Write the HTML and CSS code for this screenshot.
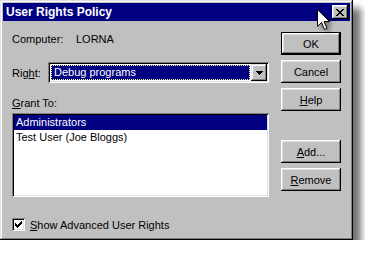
FILE: index.html
```html
<!DOCTYPE html>
<html>
<head>
    <title>User Rights Policy</title>
    <link rel="stylesheet" href="styles.css">
</head>
<body>
    <div class="window">
        <div class="titlebar">
            <span class="title">User Rights Policy</span>
            <button class="close-btn" type="button">
                <svg width="8" height="7" viewBox="0 0 8 7">
                    <path d="M0 0h2v1h1v1h2v-1h1v-1h2v1h-1v1h-1v1h-1v1h1v1h1v1h1v1h-2v-1h-1v-1h-2v1h-1v1h-2v-1h1v-1h1v-1h1v-1h-1v-1h-1v-1h-1z" fill="#000"/>
                </svg>
            </button>
        </div>

        <div class="content">
            <div class="main">
                <div class="info-row">
                    <span class="info-label">Computer:</span>
                    <span>LORNA</span>
                </div>

                <div class="right-row">
                    <label class="right-label">Rig<u>h</u>t:</label>
                    <div class="combo">
                        <div class="combo-field">
                            <span class="combo-value">Debug programs</span>
                        </div>
                        <div class="combo-arrow">
                            <svg width="7" height="4" viewBox="0 0 7 4">
                                <path d="M0 0h7v1h-1v1h-1v1h-1v1h-1v-1h-1v-1h-1v-1h-1z" fill="#000"/>
                            </svg>
                        </div>
                    </div>
                </div>

                <div class="grant-label"><u>G</u>rant To:</div>
                <div class="listbox">
                    <div class="list-item selected">Administrators</div>
                    <div class="list-item">Test User (Joe Bloggs)</div>
                </div>

                <div class="check-row">
                    <span class="checkbox">
                        <svg width="7" height="7" viewBox="0 0 7 7">
                            <path d="M6 0h1v3h-1v1h-1v1h-1v1h-1v1h-1v-1h-1v-1h-1v-3h1v1h1v1h1v-1h1v-1h1v-1h1z" fill="#000"/>
                        </svg>
                    </span>
                    <span><u>S</u>how Advanced User Rights</span>
                </div>
            </div>

            <div class="buttons">
                <button class="btn btn-default" type="button">OK</button>
                <button class="btn" type="button">Cancel</button>
                <button class="btn" type="button"><u>H</u>elp</button>
                <button class="btn btn-add" type="button"><u>A</u>dd...</button>
                <button class="btn" type="button"><u>R</u>emove</button>
            </div>
        </div>
    </div>

    <svg class="cursor" width="14" height="22" viewBox="0 0 14 22">
        <path d="M0.5 0.5v17l4-4 3 7 2.5-1-3-7h5.5z" fill="#fff" stroke="#000" stroke-width="1"/>
    </svg>
</body>
</html>
```

FILE: styles.css
```css
body {
    margin: 0;
    background: #fff;
    font-family: "Liberation Sans", Arial, sans-serif;
    font-size: 11px;
    color: #000;
}
u {
    text-decoration: underline;
    text-underline-offset: 1px;
}
.window {
    width: 353px;
    height: 240px;
    box-sizing: border-box;
    padding: 3px;
    background: #c0c0c0;
    box-shadow: inset -1px -1px #000, inset 1px 1px #dfdfdf,
                inset -2px -2px #808080, inset 2px 2px #fff,
                8px 8px 7px rgba(0,0,0,0.55);
}
.titlebar {
    height: 18px;
    background: #000080;
    display: flex;
    align-items: center;
    justify-content: space-between;
    padding: 0 2px 0 3px;
}
.title {
    color: #fff;
    font-weight: bold;
    font-size: 12px;
}
.close-btn {
    width: 16px;
    height: 14px;
    padding: 0;
    border: none;
    background: #c0c0c0;
    display: flex;
    align-items: center;
    justify-content: center;
    box-shadow: inset -1px -1px #000, inset 1px 1px #fff,
                inset -2px -2px #808080, inset 2px 2px #dfdfdf;
}
.content {
    display: flex;
    gap: 12px;
    padding: 0 9px 0 9px;
}
.main {
    width: 257px;
}
.info-row {
    margin-top: 12px;
    line-height: 13px;
    display: flex;
}
.info-label {
    width: 64px;
}
.right-row {
    margin-top: 16px;
    display: flex;
    align-items: center;
}
.right-label {
    width: 36px;
}
.combo {
    flex: 1;
    height: 21px;
    box-sizing: border-box;
    padding: 2px;
    display: flex;
    background: #fff;
    box-shadow: inset 1px 1px #808080, inset -1px -1px #fff,
                inset 2px 2px #000, inset -2px -2px #dfdfdf;
}
.combo-field {
    flex: 1;
    padding: 1px;
}
.combo-value {
    display: block;
    height: 15px;
    box-sizing: border-box;
    line-height: 13px;
    padding-left: 2px;
    background: #000080;
    color: #fff;
    border: 1px dotted #ffff99;
}
.combo-arrow {
    width: 16px;
    height: 17px;
    background: #c0c0c0;
    display: flex;
    align-items: center;
    justify-content: center;
    box-shadow: inset -1px -1px #000, inset 1px 1px #dfdfdf,
                inset -2px -2px #808080, inset 2px 2px #fff;
}
.grant-label {
    margin-top: 14px;
    line-height: 13px;
}
.listbox {
    margin-top: 3px;
    height: 84px;
    box-sizing: border-box;
    padding: 2px;
    background: #fff;
    box-shadow: inset 1px 1px #808080, inset -1px -1px #fff,
                inset 2px 2px #000, inset -2px -2px #dfdfdf;
}
.list-item {
    height: 15px;
    line-height: 15px;
    padding-left: 2px;
}
.list-item.selected {
    background: #000080;
    color: #fff;
}
.check-row {
    margin-top: 21px;
    display: flex;
    align-items: center;
    gap: 5px;
}
.checkbox {
    width: 13px;
    height: 13px;
    box-sizing: border-box;
    background: #fff;
    display: flex;
    align-items: center;
    justify-content: center;
    box-shadow: inset 1px 1px #808080, inset -1px -1px #fff,
                inset 2px 2px #000, inset -2px -2px #dfdfdf;
}
.buttons {
    width: 60px;
    padding-top: 11px;
    display: flex;
    flex-direction: column;
    gap: 5px;
}
.btn {
    width: 60px;
    height: 23px;
    padding: 0;
    border: none;
    background: #c0c0c0;
    font-family: "Liberation Sans", Arial, sans-serif;
    font-size: 11px;
    color: #000;
    box-shadow: inset -1px -1px #000, inset 1px 1px #fff,
                inset -2px -2px #808080, inset 2px 2px #dfdfdf;
}
.btn-default {
    box-shadow: inset 0 0 0 1px #000,
                inset -2px -2px #000, inset 2px 2px #fff,
                inset -3px -3px #808080, inset 3px 3px #dfdfdf;
}
.btn-add {
    margin-top: 24px;
}
.cursor {
    position: absolute;
    left: 317px;
    top: 9px;
    filter: drop-shadow(3px 3px 2px rgba(0,0,0,0.4));
}
```
